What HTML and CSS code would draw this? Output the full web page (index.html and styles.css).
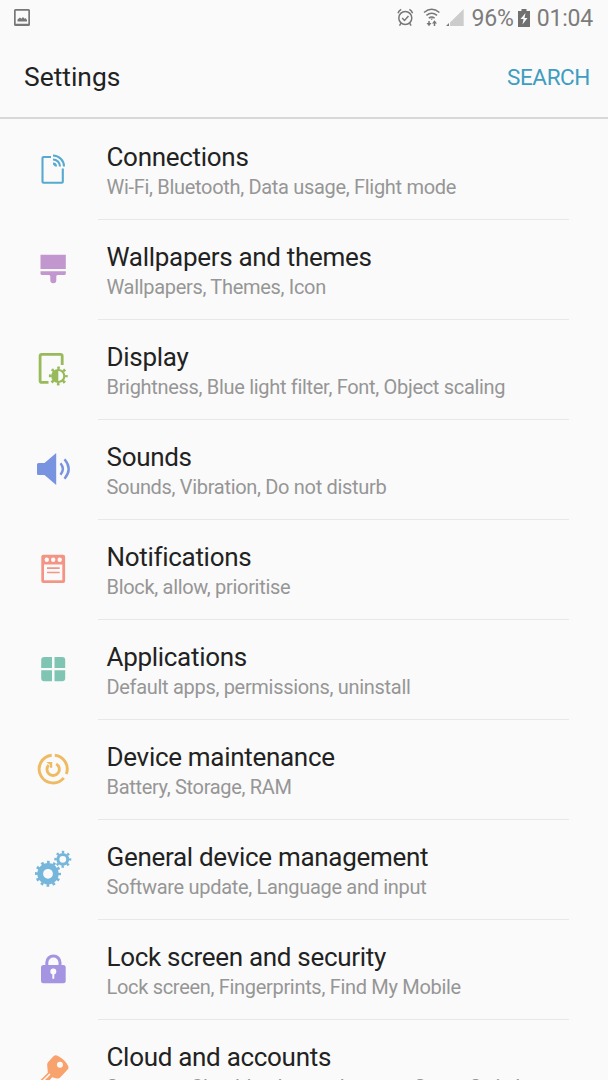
FILE: index.html
```html
<!DOCTYPE html>
<html lang="en">
<head>
<meta charset="utf-8">
<title>Settings</title>
<link rel="stylesheet" href="styles.css">
</head>
<body>
<div class="screen">
  <div class="status">
    <svg class="shot" width="16" height="18" viewBox="0 0 16 18"><path fill="#777" fill-rule="evenodd" d="M1.5 0h13Q16 0 16 1.5v14q0 1.500-1.500 1.500h-13Q0 17 0 15.500v-14Q0 0 1.500 0zM1.700 1.700v13h12.600v-13z"/><path fill="#777" d="M3.500 12.500v-2l2.500-2 1.500 1.200L9 8l1.500 1.700 1-.7 1.500 2v1.500z"/></svg>
    <div class="right">
      <svg width="78" height="22" viewBox="394 7 78 22" fill="none" stroke="#777" stroke-width="1.500">
        <circle cx="405.300" cy="18" r="6.500"/><path d="M402.200 18l2.300 2.400 4-4.300M398 13.200q.8-2.500 3.200-3.800M412.600 13.200q-.8-2.500-3.200-3.800M401 23.200l-1.500 2.500M409.600 23.200l1.500 2.500"/>
        <path d="M424 12.500q7.700-6.500 15.400 0M426.400 15.400q5.300-4.400 10.600 0M428.800 18.200q2.900-2.300 5.800 0"/>
        <path d="M429 21v3M434.500 22v4"/><path fill="#777" stroke="none" d="M426.500 23h5l-2.500 3.200zM432 23.500h5l-2.500-3.200zM430.200 18.600h3l-1.500 1.500zM446 26l3-3v3z"/>
        <path fill="#ccc" stroke="none" d="M450 26V22.500L463.700 9v17z"/>
      </svg>
      <span class="pct">96%</span>
      <svg class="bat" width="12" height="18" viewBox="0 0 12 18"><path fill="#707070" d="M0 2h3.500V0h5v2H12v16H0z"/><path fill="#fafafa" d="M7.500 4L2.500 10h3L4.500 15.500l5-6.500h-3z"/></svg>
      <span class="clock">01:04</span>
    </div>
  </div>
  <div class="header"><span class="heading">Settings</span><span class="search">SEARCH</span></div>
  <div class="list">
    <div class="row">
      <svg class="icon" viewBox="0 0 98 100" fill="none" stroke="#58a9d0" stroke-width="2.100"><path d="M51 37H43.500q-1 0-1 1V61.700q0 1 1 1H61.800q1 0 1-1V48.500"/><path d="M53 35.500A11 11 0 0 1 64 46.500M53 39.500A7 7 0 0 1 60 46.500"/><path fill="#58a9d0" stroke="none" d="M53 42.500a4 4 0 0 1 4 4h-2l-2-2z"/></svg>
      <div class="text"><div class="title">Connections</div><div class="sub">Wi-Fi, Bluetooth, Data usage, Flight mode</div></div>
    </div>
    <div class="row">
      <svg class="icon" viewBox="0 0 98 100" fill="#c296ce"><path d="M40.500 34.800H65.800V49H40.500zM40.500 51.200H65.800V53.500q0 1.500-1.500 1.500H57.500q-1.200.2-1.200 1.300V60.300a3 3 0 0 1-6 0V56.300q0-1.100-1.200-1.300H42q-1.500 0-1.500-1.500z"/></svg>
      <div class="text"><div class="title">Wallpapers and themes</div><div class="sub">Wallpapers, Themes, Icon</div></div>
    </div>
    <div class="row">
      <svg class="icon" viewBox="0 0 98 100" fill="none" stroke="#98ba5a"><path stroke-width="2.800" d="M62.200 45V36q0-1.700-1.700-1.700H41.800Q40.100 34.300 40.100 36V60.700q0 1.700 1.700 1.700H48.500"/><circle cx="58.300" cy="56" r="8" stroke-width="2.800" stroke-dasharray="2.600 3.683" stroke-dashoffset="1.300"/><circle cx="58.300" cy="56" r="6" stroke-width="2.200"/><path fill="#98ba5a" stroke="none" d="M58.300 50a6 6 0 0 0 0 12z"/></svg>
      <div class="text"><div class="title">Display</div><div class="sub">Brightness, Blue light filter, Font, Object scaling</div></div>
    </div>
    <div class="row">
      <svg class="icon" viewBox="0 0 98 100" fill="#7893df"><path d="M38.500 43H44.500L56.200 33V65L44.500 55H38.500Q37 55 37 53.500V44.500Q37 43 38.500 43z"/><path fill="none" stroke="#7893df" stroke-width="2.400" d="M60.500 43.300q4.800 5.700 0 11.400M64.500 39.300q8.400 9.700 0 19.400"/></svg>
      <div class="text"><div class="title">Sounds</div><div class="sub">Sounds, Vibration, Do not disturb</div></div>
    </div>
    <div class="row">
      <svg class="icon" viewBox="0 0 98 100"><rect x="41.300" y="34.800" width="23.800" height="28.300" rx="2" fill="#f39485"/><g fill="#fafafa"><circle cx="46.800" cy="39.800" r="2.200"/><circle cx="53.200" cy="39.800" r="2.200"/><circle cx="59.700" cy="39.800" r="2.200"/><path d="M44 44.500H62.300V60.300H44z"/></g><path stroke="#f39485" stroke-width="1.700" d="M47 48.200H59.700M47 52.500H59.700"/></svg>
      <div class="text"><div class="title">Notifications</div><div class="sub">Block, allow, prioritise</div></div>
    </div>
    <div class="row">
      <svg class="icon" viewBox="0 0 98 100" fill="#80c5b4"><path d="M44.200 37H52V48H41.200V40q0-3 3-3zM54.500 37H62.200q3 0 3 3V48H54.500zM41.200 50.300H52V61.300H44.200q-3 0-3-3zM54.500 50.300H65.200V58.300q0 3-3 3H54.500z"/></svg>
      <div class="text"><div class="title">Applications</div><div class="sub">Default apps, permissions, uninstall</div></div>
    </div>
    <div class="row">
      <svg class="icon" viewBox="0 0 98 100" fill="none" stroke="#eebb62" stroke-width="2.900"><path d="M54.800 35.200A13.900 13.900 0 0 1 66.300 54M63.800 57.900A13.900 13.900 0 1 1 51.700 35.200"/><path d="M56.200 43.900A6.200 6.200 0 1 1 48.700 45"/><path fill="#eebb62" stroke="none" d="M46.300 42H52.200V47.800H50V44.700z"/></svg>
      <div class="text"><div class="title">Device maintenance</div><div class="sub">Battery, Storage, RAM</div></div>
    </div>
    <div class="row">
      <svg class="icon" viewBox="0 0 98 100" fill="none" stroke="#76b6db"><circle cx="48" cy="53.800" r="7.800" stroke-width="5.800"/><circle cx="48" cy="53.800" r="11.500" stroke-width="3" stroke-dasharray="2.700 3.321" stroke-dashoffset="1.350"/><circle cx="62.800" cy="39.300" r="4.900" stroke-width="3"/><circle cx="62.800" cy="39.300" r="7.200" stroke-width="2.600" stroke-dasharray="2.400 3.255" stroke-dashoffset="1.200"/></svg>
      <div class="text"><div class="title">General device management</div><div class="sub">Software update, Language and input</div></div>
    </div>
    <div class="row">
      <svg class="icon" viewBox="0 0 98 100"><rect x="41" y="45" width="24.700" height="18.300" rx="2.500" fill="#a594e2"/><path fill="none" stroke="#a594e2" stroke-width="3" d="M46.800 46V42.500a6.600 6.600 0 0 1 13.200 0V46"/><circle cx="53.300" cy="51.500" r="3" fill="#fafafa"/><path stroke="#fafafa" stroke-width="2" stroke-linecap="round" d="M53.300 52V58"/></svg>
      <div class="text"><div class="title">Lock screen and security</div><div class="sub">Lock screen, Fingerprints, Find My Mobile</div></div>
    </div>
    <div class="row">
      <svg class="icon" viewBox="0 0 98 100"><g transform="translate(-1.430 -.710) scale(1.071)"><path fill="#f8a36d" d="M51.500 34.300Q53.300 32.800 55.500 34.200Q62 37.500 65 43.500Q65.900 45.500 64.300 47.200L57.500 54.300Q56.300 55.600 54.300 55.200L50 54.200L38 68L30 66L46 49.800L45.400 43Q45.200 41.200 46.300 39.800z"/><circle cx="57.300" cy="42.400" r="2.800" fill="#fafafa"/><path stroke="#fafafa" stroke-width="1.400" d="M48 51L37 62"/></g></svg>
      <div class="text"><div class="title">Cloud and accounts</div><div class="sub sub-last">Samsung Cloud, backup and restore, Smart Switch</div></div>
    </div>
  </div>
</div>
</body>
</html>
```

FILE: styles.css
```css
body { margin: 0; background: #fafafa; font-family: Roboto, "Liberation Sans", sans-serif; }
.screen { width: 608px; height: 1080px; overflow: hidden; display: flex; flex-direction: column; }
.status { height: 36px; flex: none; display: flex; justify-content: space-between; align-items: center; padding: 0 15px 0 14px; box-sizing: border-box; color: #7c7c7c; font-size: 23px; letter-spacing: -.2px; }
.right { display: flex; align-items: center; }
.bat { margin: 0 7px 0 4px; }
.header { height: 83px; flex: none; box-sizing: border-box; border-bottom: 2px solid #d8d8d8; display: flex; justify-content: space-between; align-items: center; padding: 2px 18px 1px 24px; }
.heading { font-size: 26.4px; color: #222; }
.search { font-size: 22.5px; letter-spacing: -.4px; color: #409dc1; }
.list { padding-top: 1px; }
.row { height: 100px; display: flex; }
.icon { width: 98px; height: 100px; flex: none; }
.text { width: 471px; height: 100px; box-sizing: border-box; border-bottom: 1px solid #e8e8e8; padding: 21px 0 0 8.5px; white-space: nowrap; }
.title { font-size: 26px; line-height: 32px; letter-spacing: -.3px; color: #222; }
.sub { font-size: 20px; line-height: 28px; letter-spacing: -.31px; color: #969696; }
.sub-last { letter-spacing: -.6px; }
```
